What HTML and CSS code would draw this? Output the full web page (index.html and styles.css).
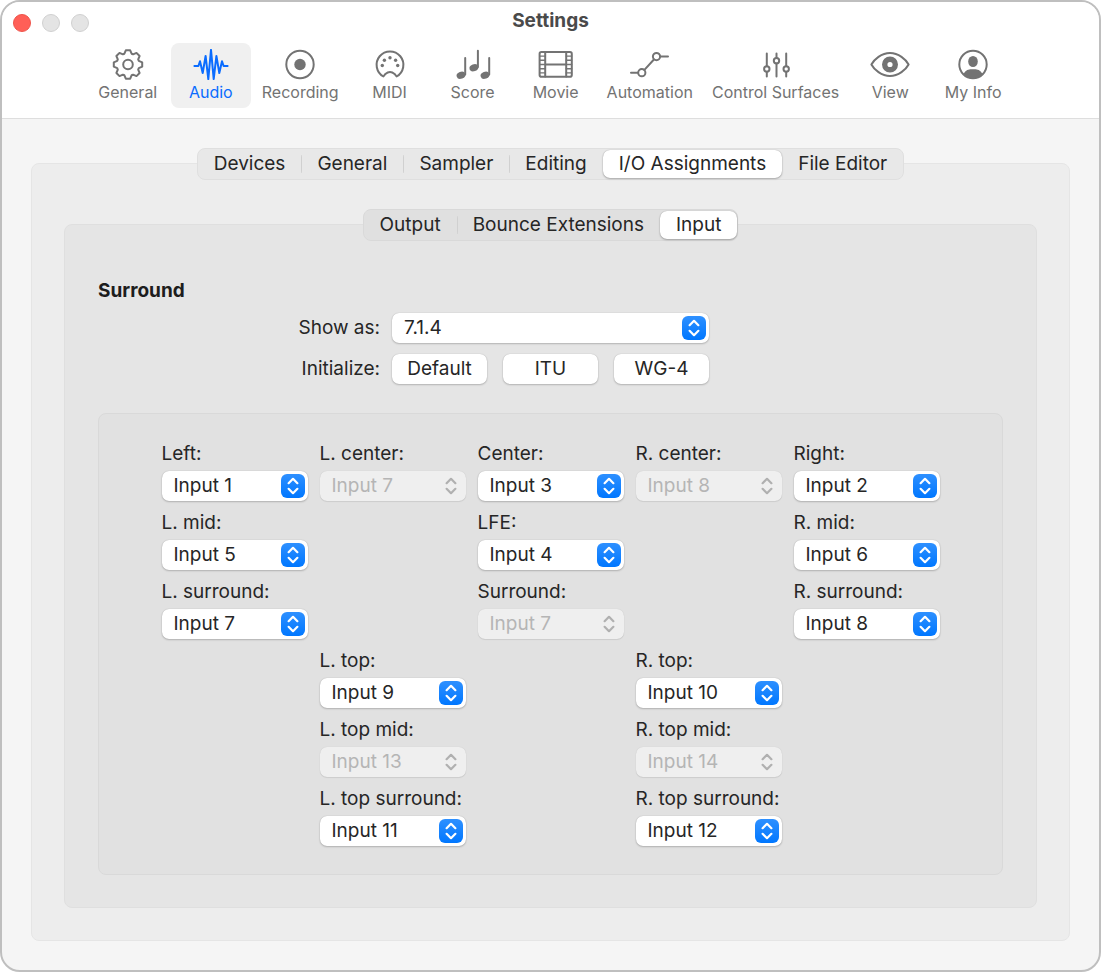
FILE: index.html
```html
<!DOCTYPE html>
<html lang="en">
<head>
    <meta charset="UTF-8">
    <meta name="viewport" content="width=device-width, initial-scale=1.0">
    <title>Settings</title>
    <link rel="stylesheet" href="styles.css">
</head>
<body>

    <!-- Up/down arrows shared by every pop-up menu -->
    <svg class="sprite" aria-hidden="true">
        <symbol id="arrows" viewBox="0 0 24 24">
            <path d="M7.6 9.2 12 4.8l4.4 4.4M7.6 14.8l4.4 4.4 4.4-4.4" fill="none" stroke="currentColor" stroke-width="2.2" stroke-linecap="round" stroke-linejoin="round"/>
        </symbol>
    </svg>

    <div class="window">
        <header class="header">
            <div class="titlebar">
                <div class="lights">
                    <button class="light close" aria-label="Close"></button>
                    <button class="light" aria-label="Minimize" disabled></button>
                    <button class="light" aria-label="Zoom" disabled></button>
                </div>
                <h1>Settings</h1>
            </div>

            <nav class="toolbar">
                <button class="tool">
                    <svg viewBox="-20 -15.5 40 32"><path d="M-3.6-10.8-2.2-14.2H2.2L3.6-10.8 5.1-10.2 8.5-11.6 11.6-8.5 10.2-5.1 10.8-3.6 14.2-2.2V2.2L10.8 3.6 10.2 5.1 11.6 8.5 8.5 11.6 5.1 10.2 3.6 10.8 2.2 14.2H-2.2L-3.6 10.8-5.1 10.2-8.5 11.6-11.6 8.5-10.2 5.1-10.8 3.6-14.2 2.2V-2.2L-10.8-3.6-10.2-5.1-11.6-8.5-8.5-11.6-5.1-10.2Z"/><circle r="4.8"/></svg>
                    General
                </button>
                <button class="tool active">
                    <svg viewBox="-20 -15.5 40 32"><path d="M-16.6 1.5H-12.6L-11-3.2-8.3 8.5-5.4-8.6-2.7 14.6 0-14.6 2.7 14.6 5.4-8.6 8.3 8.5 11-3.2 12.6 1.5H16.6"/></svg>
                    Audio
                </button>
                <button class="tool">
                    <svg viewBox="-20 -15.5 40 32"><circle r="13.7"/><circle class="solid" r="5.7"/></svg>
                    Recording
                </button>
                <button class="tool">
                    <svg viewBox="-20 -15.5 40 32"><path d="M-6.6 12A13.4 13.4 0 1 1 6.6 12L4.6 9.4Q0 5.6-4.6 9.4Z"/><g class="solid"><circle cx="-7.7" cy="1" r="1.7"/><circle cx="-5.6" cy="-4.2" r="1.7"/><circle cy="-6.8" r="1.7"/><circle cx="5.6" cy="-4.2" r="1.7"/><circle cx="7.7" cy="1" r="1.7"/></g></svg>
                    MIDI
                </button>
                <button class="tool">
                    <svg viewBox="-20 -15.5 40 32"><path d="M-7.8-6.5V10M4.9-13.7V2.5M16.2-6.5V10"/><g class="solid"><ellipse cx="-12" cy="10.8" rx="4.5" ry="3.5" transform="rotate(-20 -12 10.8)"/><ellipse cx=".9" cy="3.3" rx="4.5" ry="3.5" transform="rotate(-20 .9 3.3)"/><ellipse cx="12" cy="10.8" rx="4.5" ry="3.5" transform="rotate(-20 12 10.8)"/></g></svg>
                    Score
                </button>
                <button class="tool">
                    <svg viewBox="-20 -15.5 40 32"><rect x="-16.4" y="-12.4" width="32.2" height="24.6" rx="1.8"/><path d="M-10.8-12V12M10.2-12V12M-10.8 0H10.2"/><path class="thin" d="M-16-8.4H-10.8M-16-4.2H-10.8M-16 0H-10.8M-16 4.2H-10.8M-16 8.4H-10.8M10.2-8.4H15.6M10.2-4.2H15.6M10.2 0H15.6M10.2 4.2H15.6M10.2 8.4H15.6"/></svg>
                    Movie
                </button>
                <button class="tool">
                    <svg viewBox="-20 -15.5 40 32"><path d="M-19 8.2H-12M-5.6 5.4 3.9-5M10.4-7.9H18"/><circle cx="-8.2" cy="8.2" r="3.6"/><circle cx="6.5" cy="-7.9" r="3.6"/></svg>
                    Automation
                </button>
                <button class="tool">
                    <svg viewBox="-20 -15.5 40 32"><path d="M-9.2-11V1.7M-9.2 7.2V12M.5-11V-6.6M.5-1V12M10.2-11V1.7M10.2 7.2V12"/><circle cx="-9.2" cy="4.5" r="2.7"/><circle cx=".5" cy="-3.8" r="2.7"/><circle cx="10.2" cy="4.5" r="2.7"/></svg>
                    Control Surfaces
                </button>
                <button class="tool">
                    <svg viewBox="-20 -15.5 40 32"><path d="M-18.6 0C-16-5-8.5-11.6 0-11.6S16-5 18.6 0C16 5 8.5 11.6 0 11.6S-16 5-18.6 0Z"/><circle class="iris" r="5.3"/></svg>
                    View
                </button>
                <button class="tool">
                    <svg viewBox="-20 -15.5 40 32"><circle r="13.7"/><g class="solid"><ellipse cy="-3" rx="4.8" ry="5.5"/><path d="M-9.6 9.6C-6.5 4-2.5 4.8 0 4.8S6.5 4 9.6 9.6A13.6 13.6 0 0 1-9.6 9.6Z"/></g></svg>
                    My Info
                </button>
            </nav>
        </header>

        <main class="content">
            <div class="tabs" role="tablist">
                <button class="tab" role="tab">Devices</button>
                <button class="tab" role="tab">General</button>
                <button class="tab" role="tab">Sampler</button>
                <button class="tab" role="tab">Editing</button>
                <button class="tab selected" role="tab" aria-selected="true">I/O Assignments</button>
                <button class="tab" role="tab">File Editor</button>
            </div>

            <div class="panel outer">
                <div class="tabs" role="tablist">
                    <button class="tab" role="tab">Output</button>
                    <button class="tab" role="tab">Bounce Extensions</button>
                    <button class="tab selected" role="tab" aria-selected="true">Input</button>
                </div>

                <section class="panel inner">
                    <h2>Surround</h2>

                    <div class="form">
                        <label for="show-as">Show as:</label>
                        <div class="popup">
                            <select id="show-as"><option>7.1.4</option></select>
                            <svg><use href="#arrows"/></svg>
                        </div>
                        <span class="form-label" id="init-label">Initialize:</span>
                        <div class="buttons" role="group" aria-labelledby="init-label">
                            <button class="push">Default</button>
                            <button class="push">ITU</button>
                            <button class="push">WG-4</button>
                        </div>
                    </div>

                    <div class="channels">
                        <div class="channel col-1">
                            <label for="left">Left:</label>
                            <div class="popup"><select id="left"><option>Input 1</option></select><svg><use href="#arrows"/></svg></div>
                        </div>
                        <div class="channel col-2">
                            <label for="l-center">L. center:</label>
                            <div class="popup"><select id="l-center" disabled><option>Input 7</option></select><svg><use href="#arrows"/></svg></div>
                        </div>
                        <div class="channel col-3">
                            <label for="center">Center:</label>
                            <div class="popup"><select id="center"><option>Input 3</option></select><svg><use href="#arrows"/></svg></div>
                        </div>
                        <div class="channel col-4">
                            <label for="r-center">R. center:</label>
                            <div class="popup"><select id="r-center" disabled><option>Input 8</option></select><svg><use href="#arrows"/></svg></div>
                        </div>
                        <div class="channel col-5">
                            <label for="right">Right:</label>
                            <div class="popup"><select id="right"><option>Input 2</option></select><svg><use href="#arrows"/></svg></div>
                        </div>

                        <div class="channel col-1">
                            <label for="l-mid">L. mid:</label>
                            <div class="popup"><select id="l-mid"><option>Input 5</option></select><svg><use href="#arrows"/></svg></div>
                        </div>
                        <div class="channel col-3">
                            <label for="lfe">LFE:</label>
                            <div class="popup"><select id="lfe"><option>Input 4</option></select><svg><use href="#arrows"/></svg></div>
                        </div>
                        <div class="channel col-5">
                            <label for="r-mid">R. mid:</label>
                            <div class="popup"><select id="r-mid"><option>Input 6</option></select><svg><use href="#arrows"/></svg></div>
                        </div>

                        <div class="channel col-1">
                            <label for="l-surround">L. surround:</label>
                            <div class="popup"><select id="l-surround"><option>Input 7</option></select><svg><use href="#arrows"/></svg></div>
                        </div>
                        <div class="channel col-3">
                            <label for="surround">Surround:</label>
                            <div class="popup"><select id="surround" disabled><option>Input 7</option></select><svg><use href="#arrows"/></svg></div>
                        </div>
                        <div class="channel col-5">
                            <label for="r-surround">R. surround:</label>
                            <div class="popup"><select id="r-surround"><option>Input 8</option></select><svg><use href="#arrows"/></svg></div>
                        </div>

                        <div class="channel col-2">
                            <label for="l-top">L. top:</label>
                            <div class="popup"><select id="l-top"><option>Input 9</option></select><svg><use href="#arrows"/></svg></div>
                        </div>
                        <div class="channel col-4">
                            <label for="r-top">R. top:</label>
                            <div class="popup"><select id="r-top"><option>Input 10</option></select><svg><use href="#arrows"/></svg></div>
                        </div>

                        <div class="channel col-2">
                            <label for="l-top-mid">L. top mid:</label>
                            <div class="popup"><select id="l-top-mid" disabled><option>Input 13</option></select><svg><use href="#arrows"/></svg></div>
                        </div>
                        <div class="channel col-4">
                            <label for="r-top-mid">R. top mid:</label>
                            <div class="popup"><select id="r-top-mid" disabled><option>Input 14</option></select><svg><use href="#arrows"/></svg></div>
                        </div>

                        <div class="channel col-2">
                            <label for="l-top-surround">L. top surround:</label>
                            <div class="popup"><select id="l-top-surround"><option>Input 11</option></select><svg><use href="#arrows"/></svg></div>
                        </div>
                        <div class="channel col-4">
                            <label for="r-top-surround">R. top surround:</label>
                            <div class="popup"><select id="r-top-surround"><option>Input 12</option></select><svg><use href="#arrows"/></svg></div>
                        </div>
                    </div>
                </section>
            </div>
        </main>
    </div>

</body>
</html>
```

FILE: styles.css
```css
* {
    box-sizing: border-box;
}

body {
    margin: 0;
    background-color: #ffffff;
    color: #262626;
    font-family: Inter, "Liberation Sans", sans-serif;
    font-size: 19px;
    line-height: 24px;
}

button, select {
    font: inherit;
    color: inherit;
    border: none;
    padding: 0;
    background: none;
}

.sprite {
    display: none;
}

.window {
    margin: 0 1px 2px 0;
    border: 2px solid #bfbfbf;
    border-radius: 20px;
    background-color: #f5f5f5;
    overflow: hidden;
}

/* Title bar and toolbar */
.header {
    background-color: #ffffff;
    border-bottom: 1px solid #dedede;
    padding-bottom: 10px;
}

.titlebar {
    display: grid;
    grid-template-columns: 1fr auto 1fr;
    align-items: center;
    height: 41px;
    padding: 0 11px;
}

.lights {
    display: flex;
    gap: 11px;
}

.light {
    width: 18px;
    height: 18px;
    border: 1px solid #d0d0d0;
    border-radius: 50%;
    background-color: #e4e4e4;
}

.close {
    border-color: #ee544b;
    background-color: #ff5f57;
}

h1 {
    margin: 0 0 3px;
    font-size: 19px;
    font-weight: 700;
    color: #4a4a4a;
}

.toolbar {
    display: flex;
    justify-content: center;
    gap: 3px;
}

.tool {
    display: flex;
    flex-direction: column;
    align-items: center;
    min-width: 80px;
    padding: 6px 8px 5px;
    border-radius: 8px;
    font-size: 16px;
    line-height: 22px;
    white-space: nowrap;
    color: #737373;
}

.tool svg {
    width: 40px;
    height: 32px;
    fill: none;
    stroke: currentColor;
    stroke-width: 2;
    stroke-linecap: round;
    stroke-linejoin: round;
}

.tool .solid {
    fill: currentColor;
    stroke: none;
}

.tool .thin {
    stroke-width: 1.4;
}

.tool .iris {
    stroke-width: 5.4;
}

.tool.active {
    background-color: #f0f0f0;
    color: #0a6cff;
}

/* Nested tab panels */
.content {
    padding: 29px;
}

.tabs {
    display: flex;
    width: fit-content;
    margin: 0 auto;
    padding: 1px 0;
    border: 1px solid #dfdfdf;
    border-radius: 8px;
    background-color: #e8e8e8;
    position: relative;
}

.tab {
    height: 28px;
    padding: 0 16px;
    border-radius: 7px;
    white-space: nowrap;
}

/* Hairline between two unselected tabs */
.tab:not(.selected) + .tab:not(.selected) {
    background: linear-gradient(#d0d0d0, #d0d0d0) left center / 1px 18px no-repeat;
}

.tab.selected {
    background-color: #ffffff;
    box-shadow: 0 0 1px rgba(0, 0, 0, 0.3), 0 1px 2px rgba(0, 0, 0, 0.25);
}

.panel {
    margin-top: -17px;
    border: 1px solid #e5e5e5;
    border-radius: 8px;
    background-color: #ededed;
}

.outer {
    padding: 45px 32px 32px;
}

.outer .tabs {
    border-color: #d9d9d9;
    background-color: #e0e0e0;
}

.inner {
    padding: 54px 33px 32px;
    border-color: #dfdfdf;
    background-color: #e5e5e5;
}

h2 {
    margin: 0 0 10px;
    font-size: 19px;
    font-weight: 700;
    color: #1d1d1d;
}

.form {
    display: grid;
    grid-template-columns: 1fr 317px 1fr;
    gap: 11px 12px;
}

.form label,
.form-label {
    grid-column: 1;
    text-align: right;
    line-height: 30px;
}

.buttons {
    display: grid;
    grid-template-columns: repeat(3, 1fr);
    gap: 16px;
}

.push,
.popup select {
    height: 30px;
    border-radius: 7px;
    background-color: #ffffff;
    box-shadow: 0 0 1px rgba(0, 0, 0, 0.25), 0 1px 2px rgba(0, 0, 0, 0.2);
}

/* Pop-up menus */
.popup {
    position: relative;
}

.popup select {
    display: block;
    width: 100%;
    padding: 0 36px 0 12px;
    appearance: none;
}

.popup svg {
    position: absolute;
    top: 3px;
    right: 3px;
    width: 24px;
    height: 24px;
    border-radius: 6px;
    background: linear-gradient(#2e90ff, #0077ff);
    color: #ffffff;
    pointer-events: none;
}

.popup select:disabled {
    background-color: #efefef;
    color: #b5b5b5;
    opacity: 1;
    box-shadow: 0 0 1px rgba(0, 0, 0, 0.15), 0 1px 1px rgba(0, 0, 0, 0.08);
}

.popup select:disabled + svg {
    background: none;
    color: #b0b0b0;
}

/* Speaker grid */
.channels {
    display: grid;
    grid-template-columns: repeat(5, 146px);
    justify-content: center;
    gap: 10px 12px;
    margin-top: 29px;
    padding: 28px 0;
    border: 1px solid #d9d9d9;
    border-radius: 8px;
    background-color: #e1e1e1;
}

.channel {
    display: flex;
    flex-direction: column;
    gap: 5px;
}

.channel label {
    white-space: nowrap;
}

.col-1 { grid-column: 1; }
.col-2 { grid-column: 2; }
.col-3 { grid-column: 3; }
.col-4 { grid-column: 4; }
.col-5 { grid-column: 5; }
```
